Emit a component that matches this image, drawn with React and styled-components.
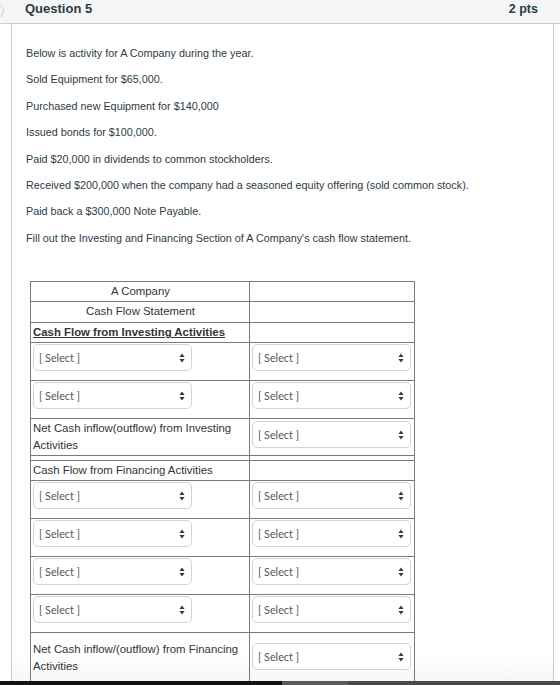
import styled, { createGlobalStyle } from "styled-components";

const GlobalStyle = createGlobalStyle`
  html, body {
    margin: 0;
    padding: 0;
    background: #fff;
  }
  body {
    font-family: "Liberation Sans", Arial, sans-serif;
  }
`;

const Page = styled.div`
  width: 560px;
  height: 685px;
  display: flex;
  flex-direction: column;
  overflow: hidden;
  background: #fff;
`;

const Scroller = styled.div`
  flex: 1;
  overflow: hidden;
  display: flex;
  flex-direction: column;
`;

const QuestionHeader = styled.header`
  height: 24px;
  flex: none;
  display: flex;
  align-items: center;
  background: #f5f5f5;
  border-bottom: 1px solid #c7cdd1;
  padding: 0 22px 6px 0;
  box-sizing: border-box;
`;

const NavDot = styled.svg`
  width: 5px;
  height: 16px;
  margin-top: 6px;
  flex: none;
`;

const QuestionTitle = styled.h2`
  margin: 0 0 0 20px;
  font-size: 13px;
  font-weight: bold;
  color: #2d3b45;
  flex: 1;
`;

const Points = styled.span`
  font-size: 12.5px;
  font-weight: bold;
  color: #2d3b45;
`;

const QuestionBody = styled.section`
  flex: 1;
  margin: 0 6px 0 11px;
  border-left: 1px solid #c7cdd1;
  border-right: 1px solid #c7cdd1;
  padding: 21px 14px 0;
  background: linear-gradient(to bottom, #fff 95%, #f3f3f3 100%);
`;

const Line = styled.p`
  margin: 0 0 10px;
  font-size: 10.8px;
  line-height: 16.4px;
  color: #2d3b45;
`;

const Sheet = styled.table`
  margin: 35px 0 0 4px;
  width: 384px;
  table-layout: fixed;
  border-collapse: collapse;
  font-size: 11.4px;
  color: #333;
`;

const Cell = styled.td`
  border: 1px solid #7a7a7a;
  padding: ${(p) => (p.$pad ? p.$pad : "1px 1px 1px 2px")};
  height: ${(p) => p.$h}px;
  line-height: 17px;
  vertical-align: ${(p) => p.$valign || "top"};
  text-align: ${(p) => (p.$center ? "center" : "left")};
  font-weight: ${(p) => (p.$bold ? "bold" : "normal")};
  text-decoration: ${(p) => (p.$bold ? "underline" : "none")};
  box-sizing: border-box;
`;

const SelectBox = styled.div`
  width: 159px;
  height: 27px;
  box-sizing: border-box;
  border: 1px solid #d3d3d3;
  border-radius: 5px;
  background: #fff;
  display: flex;
  align-items: center;
  justify-content: space-between;
  padding: 0 6px 0 5px;
  margin-top: ${(p) => p.$top || 0}px;
  font-family: Lato, "Liberation Sans", sans-serif;
  font-size: 10.8px;
  color: #555;
  font-weight: normal;
  text-decoration: none;
`;

const BottomBar = styled.div`
  height: 4px;
  flex: none;
  display: flex;
`;

const BarPart = styled.div`
  height: 100%;
  width: ${(p) => p.$w}px;
  flex: ${(p) => (p.$w ? "none" : 1)};
  background: ${(p) => p.$bg};
`;

function UpDown() {
  return (
    <svg width="6" height="10" viewBox="0 0 6 10">
      <path d="M3 0.5 L5.6 4 H0.4 Z" fill="#3a3a3a" />
      <path d="M3 9.5 L5.6 6 H0.4 Z" fill="#3a3a3a" />
    </svg>
  );
}

function Select({ top }) {
  return (
    <SelectBox $top={top}>
      <span>[ Select ]</span>
      <UpDown />
    </SelectBox>
  );
}

const lines = [
  "Below is activity for A Company during the year.",
  "Sold Equipment for $65,000.",
  "Purchased new Equipment for $140,000",
  "Issued bonds for $100,000.",
  "Paid $20,000 in dividends to common stockholders.",
  "Received $200,000 when the company had a seasoned equity offering (sold common stock).",
  "Paid back a $300,000 Note Payable.",
  "Fill out the Investing and Financing Section of A Company's cash flow statement.",
];

function SelectRow() {
  return (
    <tr>
      <Cell $h={38}>
        <Select />
      </Cell>
      <Cell $h={38}>
        <Select />
      </Cell>
    </tr>
  );
}

export default function App() {
  return (
    <>
      <GlobalStyle />
      <Page>
        <Scroller>
          <QuestionHeader>
            <NavDot viewBox="0 0 5 16">
              <circle cx="-3" cy="7" r="6.5" fill="none" stroke="#c9cdd0" strokeWidth="1" />
            </NavDot>
            <QuestionTitle>Question 5</QuestionTitle>
            <Points>2 pts</Points>
          </QuestionHeader>
          <QuestionBody>
            {lines.map((t) => (
              <Line key={t}>{t}</Line>
            ))}
            <Sheet>
              <colgroup>
                <col style={{ width: 219 }} />
                <col style={{ width: 165 }} />
              </colgroup>
              <tbody>
                <tr>
                  <Cell $h={20} $center>A Company</Cell>
                  <Cell $h={20} />
                </tr>
                <tr>
                  <Cell $h={21} $center>Cash Flow Statement</Cell>
                  <Cell $h={21} />
                </tr>
                <tr>
                  <Cell $h={20} $bold>Cash Flow from Investing Activities</Cell>
                  <Cell $h={20} />
                </tr>
                <SelectRow />
                <SelectRow />
                <tr>
                  <Cell $h={37}>Net Cash inflow(outflow) from Investing Activities</Cell>
                  <Cell $h={37}>
                    <Select top={1} />
                  </Cell>
                </tr>
                <tr>
                  <Cell $h={5} $pad="0" />
                  <Cell $h={5} $pad="0" />
                </tr>
                <tr>
                  <Cell $h={20}>Cash Flow from Financing Activities</Cell>
                  <Cell $h={20} />
                </tr>
                <SelectRow />
                <SelectRow />
                <SelectRow />
                <SelectRow />
                <tr>
                  <Cell $h={56} $pad="8px 1px 8px 2px">
                    Net Cash inflow/(outflow) from Financing Activities
                  </Cell>
                  <Cell $h={56} $pad="10px 1px 8px 2px">
                    <Select />
                  </Cell>
                </tr>
              </tbody>
            </Sheet>
          </QuestionBody>
        </Scroller>
        <BottomBar>
          <BarPart $w={282} $bg="#141210" />
          <BarPart $w={66} $bg="#5a5a5a" />
          <BarPart $bg="#4a4a4a" />
        </BottomBar>
      </Page>
    </>
  );
}
